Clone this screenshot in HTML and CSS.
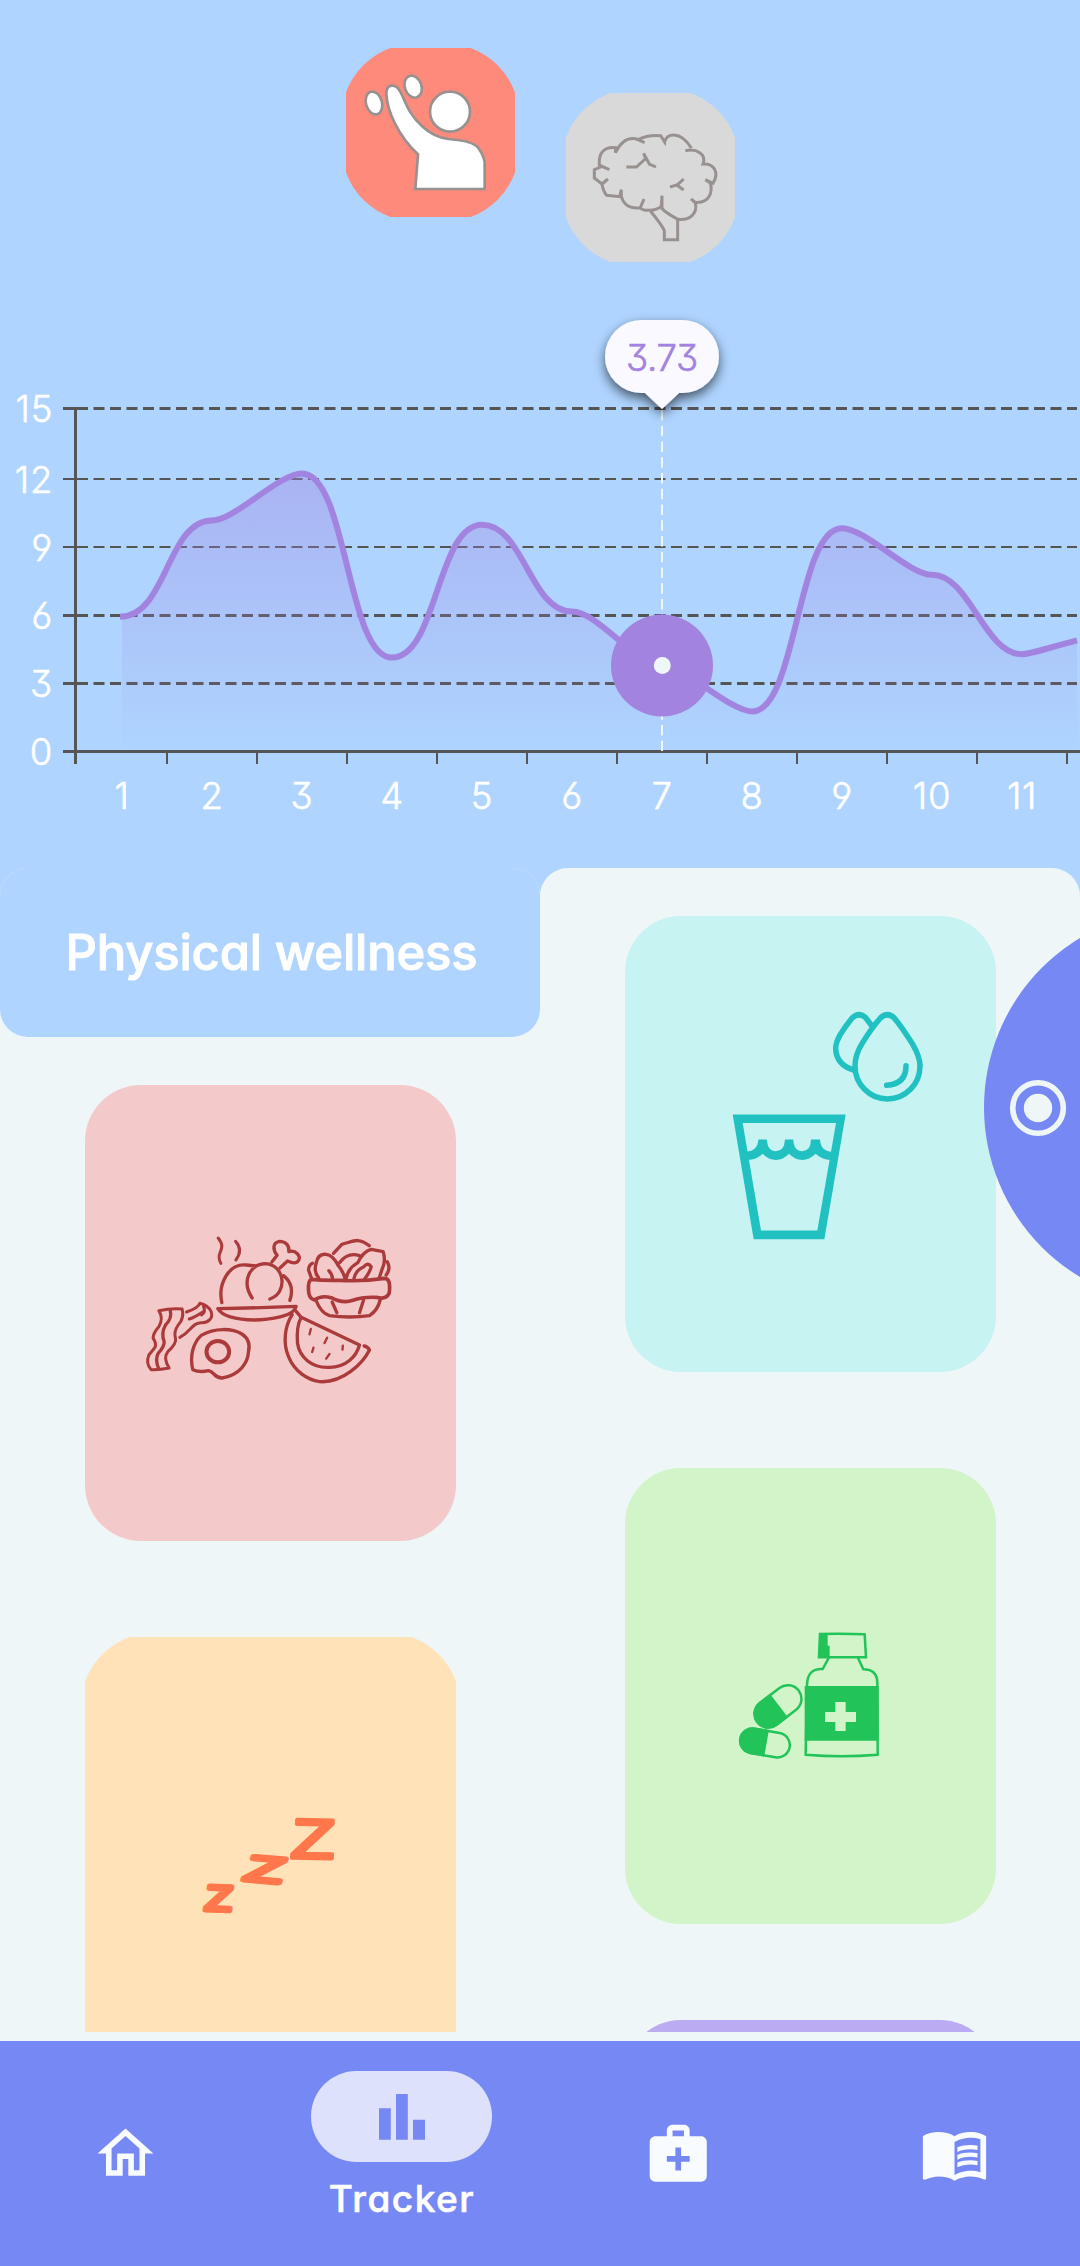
FILE: index.html
```html
<!DOCTYPE html>
<html lang="en">
<head>
<meta charset="utf-8">
<title>Tracker</title>
<link rel="stylesheet" href="styles.css">
</head>
<body>
<div class="app">
  <header class="top">
    <div class="modes">
      <svg class="mode" viewBox="0 0 169 169" role="img" aria-label="Physical">
        <path fill="#fe8a7c" d="M0 44.5A74.5 74.5 0 0 1 44.5 0H124.5A74.5 74.5 0 0 1 169 44.5V124.5A74.5 74.5 0 0 1 124.5 169H44.5A74.5 74.5 0 0 1 0 124.5Z"/>
        <g transform="translate(-16 -18) scale(.33333)" fill="#fff" stroke="#999190" stroke-width="8">
          <ellipse cx="132" cy="219" rx="24" ry="35" transform="rotate(-16 132 219)"/>
          <ellipse cx="249.500" cy="170" rx="25" ry="34" transform="rotate(-20 249.500 170)"/>
          <circle cx="360" cy="245" r="60"/>
          <path d="M264 373C205 320 170 240 169 190C169 160 198 160 210 184C226 210 232 250 278 290Q310 320 355 327C400 330 425 337 440 348Q457 366 464 395V477H256Z"/>
        </g>
      </svg>
      <svg class="mode mode-low" viewBox="0 0 169 169" role="img" aria-label="Mental">
        <path fill="#d9d9d9" d="M0 44.5A74.5 74.5 0 0 1 44.5 0H124.500A74.5 74.5 0 0 1 169 44.5V124.5A74.5 74.5 0 0 1 124.500 169H44.5A74.5 74.5 0 0 1 0 124.5Z"/>
        <g transform="translate(-236 -63) scale(.33333)" fill="none" stroke="#999190" stroke-width="9">
          <path d="M944 338L924 329C945 318 968 315 992 317L1004 336C1008 310 1050 300 1084 354"/>
          <path d="M926 329C900 320 876 328 856 368L857 353C825 350 805 365 808 405L838 419L816 409L793 419V444L816 462L834 447L816 462C818 475 822 487 830 496L869 500L874 479V500C882 528 905 537 931 533L942 507L931 533C937 543 976 546 994 528L996 497V536C1012 552 1030 560 1043 568"/>
          <path d="M1066 362C1100 355 1130 372 1119 402C1150 400 1170 425 1149 460L1126 449L1141 459C1148 485 1140 520 1096 517L1083 507L1096 519C1103 550 1080 572 1043 568V629H1003V602C998 590 982 568 961 543"/>
          <path d="M889 411H919L947 386L941 370L958 402L978 411M1020 471L1043 464L1061 447M1040 465L1061 480"/>
        </g>
      </svg>
    </div>

    <svg class="chart" viewBox="0 300 1080 568" role="img" aria-label="Physical wellness by day">
      <defs>
        <linearGradient id="area" gradientUnits="userSpaceOnUse" x1="0" y1="408" x2="0" y2="751">
          <stop offset="0" stop-color="#a284e0" stop-opacity=".5"/>
          <stop offset="1" stop-color="#a284e0" stop-opacity="0"/>
        </linearGradient>
        <filter id="lift" x="-30%" y="-30%" width="160%" height="170%">
          <feDropShadow dx="0" dy="5" stdDeviation="6" flood-color="#000" flood-opacity=".62"/>
        </filter>
      </defs>
      <g class="grid">
        <path stroke-width="3" d="M77 408.500H1077M77 615.500H1077M77 683.500H1077"/>
        <path stroke-width="2" d="M77 479H1077M77 547H1077"/>
      </g>
      <path fill="url(#area)" d="M122 616.700C167 616.700 167 520.400 212 520.400C235 520.400 279 473.400 302 473.400C347 473.400 347 657.600 392 657.600C437 657.600 437 524.800 482 524.800C524 524.800 530 611.600 572 611.600C598 611.600 636 665.400 662 665.400C684 665.400 730 711.400 752 711.400C797 711.400 797 528.200 842 528.200C865 528.200 909 574.800 932 574.800C970 574.800 984 654.200 1022 654.200C1030 654.200 1044 649 1077 640.400V751H122Z"/>
      <g class="axis">
        <path stroke-width="3" d="M75.500 407V764M63 751.500H1080M63 408.500H77M63 615.500H77M63 683.500H77"/>
        <path stroke-width="2" d="M63 479H77M63 547H77M167 752V764M257 752V764M347 752V764M437 752V764M527 752V764M617 752V764M707 752V764M797 752V764M887 752V764M977 752V764M1067 752V764"/>
      </g>
      <path class="line" d="M120 616.700C167 616.700 167 520.400 212 520.400C235 520.400 279 473.400 302 473.400C347 473.400 347 657.600 392 657.600C437 657.600 437 524.800 482 524.800C524 524.800 530 611.600 572 611.600C598 611.600 636 665.400 662 665.400C684 665.400 730 711.400 752 711.400C797 711.400 797 528.200 842 528.200C865 528.200 909 574.800 932 574.800C970 574.800 984 654.200 1022 654.200C1030 654.200 1044 649 1077 640.400"/>
      <path class="guide" d="M662 410V751"/>
      <circle cx="662" cy="665.500" r="51" fill="#a284e0"/>
      <circle cx="662.300" cy="665.500" r="8.500" fill="#eef6f8"/>
      <path fill="#faf9ff" filter="url(#lift)" d="M641.500 320H682.500A36.500 36.500 0 0 1 682.500 393H679L662 409L645 393H641.500A36.500 36.500 0 0 1 641.500 320Z"/>
      <text class="value" x="662" y="370.500">3.73</text>
      <g class="ylabels">
        <text x="53" y="422">15</text><text x="53" y="493">12</text><text x="53" y="561">9</text>
        <text x="53" y="629">6</text><text x="53" y="697">3</text><text x="53" y="765">0</text>
      </g>
      <g class="xlabels">
        <text x="122" y="809">1</text><text x="212" y="809">2</text><text x="302" y="809">3</text><text x="392" y="809">4</text>
        <text x="482" y="809">5</text><text x="572" y="809">6</text><text x="662" y="809">7</text><text x="752" y="809">8</text>
        <text x="842" y="809">9</text><text x="932" y="809">10</text><text x="1022" y="809">11</text>
      </g>
    </svg>
  </header>

  <main class="board">
    <section class="column">
      <h1 class="tab">Physical wellness</h1>
      <div class="cards">
        <article class="card card-food">
          <svg width="280" height="200" viewBox="1.500 9 840 600" role="img" aria-label="Food">
            <g fill="none" stroke="#ab3a3b" stroke-width="9" stroke-linecap="round" stroke-linejoin="round">
              <path d="M266 84C295 120 255 125 274 160M318 94Q342 120 319 150"/>
              <path stroke-width="10" d="M277 278C265 225 295 160 350 165L380 168M368 264C335 215 360 163 408 161C468 165 475 250 421 267"/>
              <path stroke-width="10" d="M462 197Q497 225 481 271"/>
              <path stroke-width="10" d="M427 156L443 136C430 120 428 98 450 94C470 94 480 108 478 125C500 118 515 140 507 152C500 163 485 158 474 153L452 173"/>
              <path stroke-width="10" d="M265 296Q380 294 500 289Q495 310 455 320Q370 340 300 320Q275 312 265 296Z"/>
              <path stroke-width="9" d="M88 302Q125 294 158 297Q165 325 146 345Q132 365 138 385Q142 400 115 425Q100 445 119 474Q90 480 65 479Q48 460 58 435L76 413Q82 400 71 385Q70 370 88 350Q103 325 88 302Z"/>
              <path stroke-width="10" d="M122 300Q129 325 108 345Q94 370 104 395Q105 410 86 430Q76 450 87 475"/>
              <path d="M151 382C185 365 185 340 214 338C235 340 252 325 245 305Q235 285 211 280Q207 293 171 306M179 327Q195 322 221 305M222 290Q230 305 216 315"/>
              <path stroke-width="10" d="M190 479C180 440 190 400 215 376C255 352 310 355 337 372Q365 390 357 425C355 460 330 495 278 504C255 505 255 485 237 482Q210 488 190 479Z"/>
              <ellipse stroke-width="12" cx="265" cy="425" rx="34" ry="32"/>
              <path stroke-width="10" d="M488 314C465 350 460 400 477 440C495 485 535 510 570 515C640 520 700 460 720 420Q715 410 704 408M500 304L515 322L690 405C680 440 650 472 600 472C545 475 510 440 504 400Q500 350 515 322"/>
              <path stroke-width="7" d="M544 357L540 373M593 383L585 399M552 413L548 426M600 432L590 446M640 407L639 419"/>
              <path stroke-width="11" d="M545 208Q580 212 630 211Q700 215 765 205Q785 205 779 250Q770 270 740 262Q700 260 670 271Q640 282 605 263Q575 255 555 270Q537 265 537 240Q535 215 545 208Z"/>
              <path stroke-width="10" d="M559 270Q575 310 600 317Q660 325 720 317Q745 300 752 270M608 276L622 308M702 271L690 308"/>
              <path stroke-width="10" d="M567 203Q552 185 560 160Q565 130 590 133Q610 135 625 165Q645 190 648 211M598 182Q610 195 609 209M612 130L637 103C670 95 685 80 719 107M630 158Q655 125 690 137M649 208Q655 175 685 158Q700 125 725 118L761 125Q770 155 757 180L749 205M673 208Q678 180 702 171Q715 155 725 170Q722 185 705 208M549 160Q538 165 537 180L545 202M773 155Q785 175 770 195"/>
            </g>
          </svg>
        </article>
        <article class="card card-sleep">
          <svg class="fill" viewBox="0 0 371 456" role="img" aria-label="Sleep">
            <path fill="#ffe2b8" d="M0 44.500A74.500 74.500 0 0 1 44.500 0H326.500A74.500 74.500 0 0 1 371 44.500V456H0Z"/>
            <g class="zzz" transform="translate(-25 -17) scale(.33333)">
              <text font-size="166" stroke-width="12" transform="translate(691 713) rotate(1) skewX(-3) scale(1.280 1)">Z</text>
              <text font-size="108" stroke-width="14" transform="translate(547 780) rotate(5) skewX(-14) scale(1.720 1)">Z</text>
              <text font-size="106" stroke-width="15" transform="translate(433 870) rotate(2) skewX(-5) scale(1.220 1)">Z</text>
            </g>
          </svg>
        </article>
      </div>
    </section>

    <section class="column">
      <div class="cards">
        <article class="card card-water">
          <svg class="fill" viewBox="0 0 371 456" role="img" aria-label="Water">
            <g transform="translate(-25 -56) scale(.33333 .34436)">
              <path fill="#22c1c1" fill-rule="evenodd" d="M398 739H737L673 1101H461ZM428 764L483 1076H652L708 764Z"/>
              <path fill="#22c1c1" d="M438 847Q473 846 475 812H501Q502 846 528 846Q553 846 555 812H580Q581 846 607 846Q632 846 633 812H660Q662 846 696 848L692 871Q665 870 647 853Q628 871 607 871Q585 871 567 853Q549 871 528 871Q505 871 488 853Q470 871 442 871Z"/>
              <g fill="none" stroke="#22c1c1" stroke-width="16.500" stroke-linecap="round">
                <path d="M841 459Q862 440 883 459Q905 484 938 535Q960 572 960 598A97.500 96 0 0 1 765 598Q765 565 788 530Q816 486 841 459Z"/>
                <path stroke-linecap="butt" d="M820 487L797 458Q777 440 756 459Q738 480 721 507Q707 530 707 548Q709 597 765 611"/>
                <path d="M918 598Q918 650 860 654"/>
              </g>
            </g>
          </svg>
        </article>
        <article class="card card-meds">
          <svg class="fill" viewBox="0 0 371 456" role="img" aria-label="Medication">
            <g transform="translate(85 142) scale(.33333)" fill="none" stroke="#22c358" stroke-width="7.500">
              <path fill="#22c358" stroke="none" d="M325 144L329 70L353 69V107H359V144ZM284 228H506V392H284Z"/>
              <path d="M330 72Q400 70 464 73L468 142H327ZM356 144L338 177Q292 175 291 225L287 434Q395 443 503 434L502 220Q502 178 460 178L444 144"/>
              <path fill="#d1f4c9" stroke="none" d="M376 276H407V306H438V336H407V363H376V336H345V306H376Z"/>
              <g transform="translate(204 289) rotate(-37.500)">
                <rect x="-78" y="-41" width="156" height="82" rx="41"/>
                <path fill="#22c358" d="M0-41H-37A41 41 0 0 0-37 41H0Z"/>
              </g>
              <g transform="translate(165 399) rotate(10)">
                <rect x="-75" y="-37" width="150" height="74" rx="37"/>
                <path fill="#22c358" d="M1-37H-38A37 37 0 0 0-38 37H1Z"/>
              </g>
            </g>
          </svg>
        </article>
        <article class="card card-more"></article>
      </div>
    </section>

    <button class="orb" aria-label="Record">
      <svg width="58" height="58" viewBox="0 0 58 58">
        <circle cx="29" cy="29" r="25.300" fill="none" stroke="#eef6f8" stroke-width="5.600"/>
        <circle cx="29" cy="29" r="14.200" fill="#eef6f8"/>
      </svg>
    </button>
  </main>

  <nav class="nav">
    <a class="item"><svg width="67" height="67" viewBox="0 0 24 24"><path d="M12 3L2 12h3v8h6v-6h2v6h6v-8h3L12 3zm5 15h-2v-6H9v6H7v-7.810l5-4.500 5 4.500V18z"/></svg></a>
    <a class="item item-active">
      <span class="pill"><svg width="46" height="46" viewBox="0 0 46 46"><path d="M0 14.300H11.800V45.700H0ZM17 0H28.800V45.700H17ZM34 25.700H46V45.700H34Z"/></svg></span>
      <span class="label">Tracker</span>
    </a>
    <a class="item"><svg width="68.500" height="68.500" viewBox="0 0 24 24"><path d="M20 6h-4V4c0-1.100-.9-2-2-2h-4c-1.100 0-2 .9-2 2v2H4c-1.100 0-2 .9-2 2v12c0 1.100.9 2 2 2h16c1.100 0 2-.9 2-2V8c0-1.100-.9-2-2-2zM10 4h4v2h-4V4zm6 11h-3v3h-2v-3H8v-2h3v-3h2v3h3v2z"/></svg></a>
    <a class="item"><svg width="69" height="69" viewBox="0 0 24 24"><path d="M21 5c-1.110-.35-2.330-.5-3.500-.5-1.950 0-4.050.4-5.500 1.500-1.450-1.100-3.550-1.500-5.500-1.500S2.450 4.900 1 6v14.650c0 .25.25.5.5.5.1 0 .15-.05.25-.05C3.100 20.450 5.050 20 6.500 20c1.950 0 4.050.4 5.500 1.500 1.350-.85 3.800-1.500 5.500-1.500 1.650 0 3.350.3 4.750 1.050.1.050.15.050.25.050.25 0 .5-.25.5-.5V6c-.6-.45-1.250-.75-2-1zm0 13.500c-1.100-.35-2.300-.5-3.500-.5-1.700 0-4.150.65-5.500 1.500V8c1.350-.85 3.800-1.500 5.500-1.500 1.200 0 2.400.15 3.500.5v11.500z"/><path d="M17.500 10.500c.88 0 1.730.09 2.500.26V9.240c-.79-.15-1.640-.24-2.500-.24-1.700 0-3.240.29-4.500.83v1.660c1.130-.64 2.700-.99 4.500-.99zM13 12.490v1.660c1.130-.64 2.700-.99 4.500-.99.88 0 1.730.09 2.500.26V11.900c-.79-.15-1.640-.24-2.500-.24-1.700 0-3.240.3-4.500.83zM17.500 14.330c-1.700 0-3.240.29-4.500.83v1.660c1.130-.64 2.700-.99 4.500-.99.88 0 1.730.09 2.500.26v-1.520c-.79-.16-1.640-.24-2.500-.24z"/></svg></a>
  </nav>
</div>
</body>
</html>
```
FILE: styles.css
```css
* { box-sizing: border-box; }
body { margin: 0; }
svg { display: block; }

.app {
  width: 1080px;
  height: 2266px;
  display: flex;
  flex-direction: column;
  overflow: hidden;
  background: #eef6f8;
  font-family: Inter, "Noto Sans", sans-serif;
}

.top { background: #aed4ff; padding-top: 48px; }
.modes { display: flex; justify-content: center; gap: 51px; padding-left: 1px; }
.mode { width: 169px; height: 169px; }
.mode-low { margin-top: 45px; }

.chart { width: 1080px; height: 568px; margin-top: 38px; }
.chart text {
  font: 300 36.500px Inter, "Noto Sans", sans-serif;
  font-feature-settings: "cv03", "cv04", "cv09";
  letter-spacing: .7px;
  fill: #fff;
  stroke: #fff;
  stroke-width: .6px;
  text-anchor: middle;
}
.chart .ylabels text { text-anchor: end; }
.chart .value { fill: #a284e0; stroke: #a284e0; letter-spacing: -.3px; }
.grid { stroke: #555; fill: none; stroke-dasharray: 11 5.500; }
.axis { stroke: #555; fill: none; }
.line { fill: none; stroke: #a284e0; stroke-width: 6; }
.guide { stroke: #eef6f8; stroke-width: 2; stroke-dasharray: 10.500 5.250; }

.board {
  position: relative;
  height: 1164px;
  display: grid;
  grid-template-columns: 1fr 1fr;
  overflow: hidden;
  background: #aed4ff linear-gradient(#eef6f8, #eef6f8) 0 60px no-repeat;
}
.column { background: #eef6f8; border-radius: 28px 28px 0 0; }
.tab {
  margin: 0;
  height: 169px;
  padding-left: 3px;
  display: flex;
  align-items: center;
  justify-content: center;
  border-radius: 28px;
  background: #aed4ff;
  color: #fff;
  font-size: 49px;
  font-weight: 500;
  line-height: 1;
  letter-spacing: -.200px;
  -webkit-text-stroke: 1px #fff;
  font-feature-settings: "cv11";
}
.cards { display: flex; flex-direction: column; align-items: center; gap: 96px; padding-top: 48px; }
.card {
  width: 371px;
  height: 456px;
  flex: none;
  display: flex;
  align-items: center;
  justify-content: center;
  border-radius: 56px;
}
.card-food { background: #f4c9ca; }
.card-sleep { border-radius: 0; }
.card-water { background: #c7f3f2; }
.card-meds { background: #d1f4c9; }
.card-more { background: #bbabf3; }
.fill { width: 371px; height: 456px; }
.zzz text {
  font-family: "Liberation Sans", sans-serif;
  fill: #ff774b;
  stroke: #ff774b;
  stroke-linejoin: round;
}

.orb {
  position: absolute;
  left: 984px;
  top: 42px;
  width: 395px;
  height: 395px;
  padding: 0 0 0 24.500px;
  border: 0;
  border-radius: 50%;
  display: flex;
  align-items: center;
  background: #7688f4;
}

.nav {
  margin-top: 9px;
  height: 225px;
  display: grid;
  grid-template-columns: repeat(4, 1fr);
  column-gap: 24.500px;
  background: #7688f4;
}
.item { display: flex; flex-direction: column; align-items: center; justify-content: center; fill: #f8fbff; }
.item-active { justify-content: flex-start; padding-top: 30px; }
.pill {
  width: 181px;
  height: 91px;
  display: flex;
  align-items: center;
  justify-content: center;
  border-radius: 46px;
  background: #dde1fb;
  fill: #7688f4;
}
.label {
  margin-top: 14px;
  color: #fff;
  font-size: 37px;
  font-weight: 500;
  line-height: 46px;
  letter-spacing: 1.500px;
  -webkit-text-stroke: .6px #fff;
  font-feature-settings: "cv11";
}
```
